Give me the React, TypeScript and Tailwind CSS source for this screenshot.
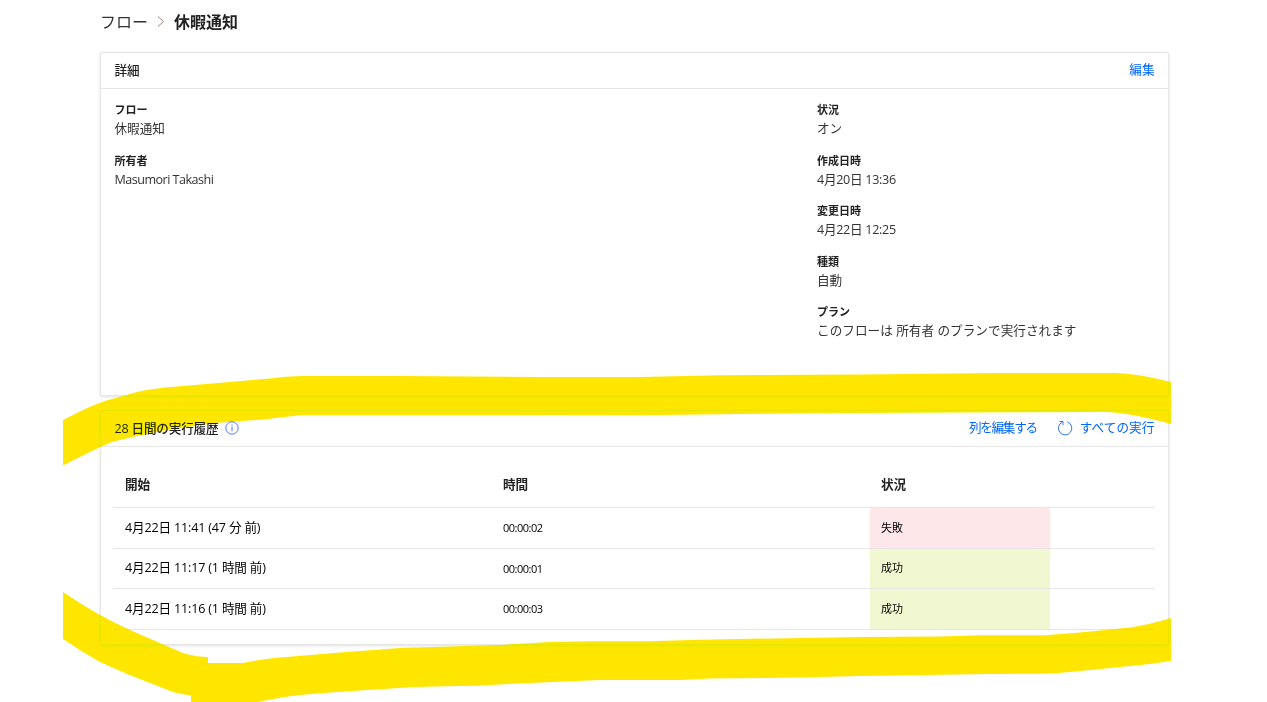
import React from "react";
import clsx from "clsx";

interface FieldProps {
  label: string;
  value: string;
  valueClass?: string;
}

interface Run {
  start: string;
  duration: string;
  status: "失敗" | "成功";
}

const leftFields: FieldProps[] = [
  { label: "フロー", value: "休暇通知" },
  { label: "所有者", value: "Masumori Takashi", valueClass: "tracking-[-0.53px]" },
];

const rightFields: FieldProps[] = [
  { label: "状況", value: "オン" },
  { label: "作成日時", value: "4月20日 13:36", valueClass: "tracking-[-0.3px]" },
  { label: "変更日時", value: "4月22日 12:25", valueClass: "tracking-[-0.3px]" },
  { label: "種類", value: "自動" },
  { label: "プラン", value: "このフローは 所有者 のプランで実行されます", valueClass: "tracking-[0.05px]" },
];

const runs: Run[] = [
  { start: "4月22日 11:41 (47 分 前)", duration: "00:00:02", status: "失敗" },
  { start: "4月22日 11:17 (1 時間 前)", duration: "00:00:01", status: "成功" },
  { start: "4月22日 11:16 (1 時間 前)", duration: "00:00:03", status: "成功" },
];

function Field({ label, value, valueClass }: FieldProps) {
  return (
    <div className="h-[50.5px]">
      <div className="text-[11px] leading-[18px] font-semibold text-[#222]">{label}</div>
      <div className={clsx("text-[12.6px] leading-[19px]", valueClass)}>{value}</div>
    </div>
  );
}

function InfoIcon() {
  return (
    <svg className="-mt-px ml-[7px] h-[14px] w-[14px]" viewBox="0 0 14 14" fill="none" stroke="#3b6cf0">
      <circle cx="7" cy="7" r="6.2" strokeWidth="0.9" />
      <path d="M7 5.8v4.4M7 3.6v1.1" strokeWidth="0.9" />
    </svg>
  );
}

function RefreshIcon() {
  return (
    <svg className="ml-5 mr-[7px] h-4 w-4" viewBox="0 0 16 16" fill="none" stroke="#2a6df5" strokeWidth="0.95">
      <path d="M10.300 1.900A6.700 6.700 0 1 1 5.400 2.100" />
      <path d="M2.500 1.500h3.500v3.500" />
    </svg>
  );
}

// 蛍光ペンのマーカー
function Highlighter() {
  return (
    <svg
      className="pointer-events-none absolute inset-0 h-[702px] w-[1267px] mix-blend-darken"
      viewBox="0 0 1267 702"
      fill="#ffe600"
    >
      <path d="M63 420L84 409.500Q100 402 112 399L135 392.500Q150 389 165 387.500L270 378.500Q285 376 302 376L400 376L540 377H640L720 375.300L860 374.500L1000 373H1115Q1138 373.500 1171 382V424Q1130 412.500 1105 412L860 413L740 414L640 415.300L480 415H302L263 419.500L215 423L167 430Q130 437 112 442Q95 449 63 465.500Z" />
      <path d="M63 592Q95 614 130 630L183 653Q196 657 208 657V663H243Q258 659.500 275 658L340 652.500L400 648L500 645L550 642L590 641.300H650L700 639.700L860 637L940 636.500L980 635.300H1045L1080 632.500L1130 627.500Q1150 624.500 1171 618V661L1150 664L1110 668L1070 672Q1055 673.500 1040 673.700L990 674L860 676L800 677.500L710 678.500L680 680H600L530 683L480 685.500L415 687L340 691.800L300 695Q285 696.500 258 702H191V695.500Q182 694.500 173 692L127 674L100 662Q82 652 63 639Z" />
    </svg>
  );
}

export default function App() {
  return (
    <div className="relative h-[702px] w-[1267px] overflow-hidden bg-white pl-[100px] font-['Open_Sans','Noto_Sans_CJK_JP',sans-serif] text-[12.6px] text-[#333]">
      <nav className="flex h-[52px] items-start pt-[10px] text-base leading-6">
        <span>フロー</span>
        <svg className="mx-[9px] mt-[5px] h-[13px] w-2" viewBox="0 0 8 13" fill="none" stroke="#98857c" strokeWidth="1">
          <path d="M1 1.500L6.500 6.500L1 11.500" />
        </svg>
        <span className="font-bold text-[#222]">休暇通知</span>
      </nav>

      <section className="h-[344px] w-[1069px] rounded-[2px] border border-[#e6e6e6] shadow-[0_1px_3px_rgba(0,0,0,0.12)]">
        <header className="flex h-9 items-center justify-between border-b border-[#e6e6e6] px-[13.5px]">
          <h2 className="pt-[2px] font-medium text-[#222]">詳細</h2>
          <a className="text-[#0066ff]">編集</a>
        </header>
        <div className="flex px-[13.5px] pt-3">
          <div className="w-[702.5px]">
            {leftFields.map((f) => (
              <Field key={f.label} {...f} />
            ))}
          </div>
          <div>
            {rightFields.map((f) => (
              <Field key={f.label} {...f} />
            ))}
          </div>
        </div>
      </section>

      <section className="mt-[14px] h-[235px] w-[1069px] rounded-[2px] border border-[#e6e6e6] shadow-[0_1px_3px_rgba(0,0,0,0.12)]">
        <header className="flex h-9 items-center justify-between border-b border-[#e6e6e6] px-[13.5px]">
          <div className="flex items-center">
            <h2 className="pt-[2px] font-medium tracking-[-0.2px] text-[#222]">28 日間の実行履歴</h2>
            <InfoIcon />
          </div>
          <div className="flex items-center text-[#0066ff]">
            <a className="tracking-[-1.3px]">列を編集する</a>
            <RefreshIcon />
            <a className="tracking-[0.1px]">すべての実行</a>
          </div>
        </header>
        <div className="ml-3 w-[1041px]">
          <div className="grid h-[61px] grid-cols-[378px_379px_180px] items-center border-b border-[#e6e6e6] pt-[17px] font-semibold text-[#222]">
            <div className="pl-3">開始</div>
            <div className="pl-3">時間</div>
            <div className="pl-[11px]">状況</div>
          </div>
          {runs.map((run) => (
            <div
              key={run.start}
              className="grid h-[40.6px] grid-cols-[378px_379px_180px] items-center border-b border-[#e6e6e6] text-black"
            >
              <div className="pt-px pl-3 tracking-[-0.18px]">{run.start}</div>
              <div className="pt-px pl-3 text-[11px] tracking-[-0.5px]">{run.duration}</div>
              <div
                className={clsx(
                  "flex h-full items-center pl-[11px] text-[11px]",
                  run.status === "失敗" ? "bg-[#fde7e9]" : "bg-[#f1f7d0]"
                )}
              >
                {run.status}
              </div>
            </div>
          ))}
        </div>
      </section>

      <Highlighter />
    </div>
  );
}
